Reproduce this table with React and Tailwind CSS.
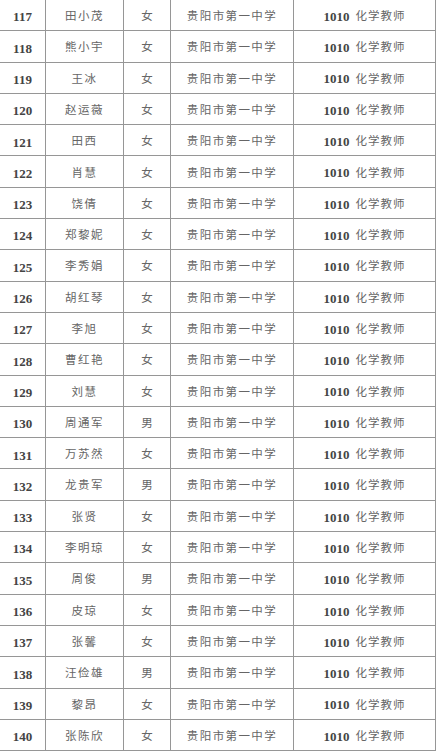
import React from 'react';

const rows = [
  [117, '田小茂', '女'],
  [118, '熊小宇', '女'],
  [119, '王冰', '女'],
  [120, '赵运薇', '女'],
  [121, '田西', '女'],
  [122, '肖慧', '女'],
  [123, '饶倩', '女'],
  [124, '郑黎妮', '女'],
  [125, '李秀娟', '女'],
  [126, '胡红琴', '女'],
  [127, '李旭', '女'],
  [128, '曹红艳', '女'],
  [129, '刘慧', '女'],
  [130, '周通军', '男'],
  [131, '万苏然', '女'],
  [132, '龙贵军', '男'],
  [133, '张贤', '女'],
  [134, '李明琼', '女'],
  [135, '周俊', '男'],
  [136, '皮琼', '女'],
  [137, '张馨', '女'],
  [138, '汪俭雄', '男'],
  [139, '黎昂', '女'],
  [140, '张陈欣', '女'],
];

const cjk = "font-['Liberation_Serif','Noto_Sans_CJK_SC',serif]";

export default function App() {
  return (
    <div className="w-[440px] h-[756px] bg-white overflow-hidden">
      <div className="w-[436px]">
        {rows.map(([num, name, sex]) => (
          <div
            key={num}
            className="flex h-[31.3px] border-b border-[#969696] box-border"
          >
            {/* 序号 */}
            <div className="w-[46px] shrink-0 border-r border-[#969696] flex items-center justify-center pt-[4px]">
              <span className="font-['Liberation_Serif',serif] font-bold text-[13px] text-[#444]">
                {num}
              </span>
            </div>
            {/* 姓名 */}
            <div className="w-[78px] shrink-0 border-r border-[#969696] flex items-center justify-center pt-[3px]">
              <span className={`${cjk} text-[11.5px] tracking-[1.5px] text-[#666]`}>{name}</span>
            </div>
            {/* 性别 */}
            <div className="w-[47px] shrink-0 border-r border-[#969696] flex items-center justify-center pt-[3px]">
              <span className={`${cjk} text-[11.5px] text-[#666]`}>{sex}</span>
            </div>
            {/* 学校 */}
            <div className="w-[123px] shrink-0 border-r border-[#969696] flex items-center justify-center pt-[3px]">
              <span className={`${cjk} text-[11.5px] tracking-[1.4px] text-[#666]`}>贵阳市第一中学</span>
            </div>
            {/* 学科 */}
            <div className="w-[142px] shrink-0 border-r border-[#969696] flex items-center justify-center pt-[3px]">
              <span className="font-['Liberation_Serif',serif] font-bold text-[13px] text-[#444]">1010</span>
              <span className={`${cjk} ml-[6px] text-[11.5px] tracking-[1px] text-[#666]`}>化学教师</span>
            </div>
          </div>
        ))}
      </div>
    </div>
  );
}
